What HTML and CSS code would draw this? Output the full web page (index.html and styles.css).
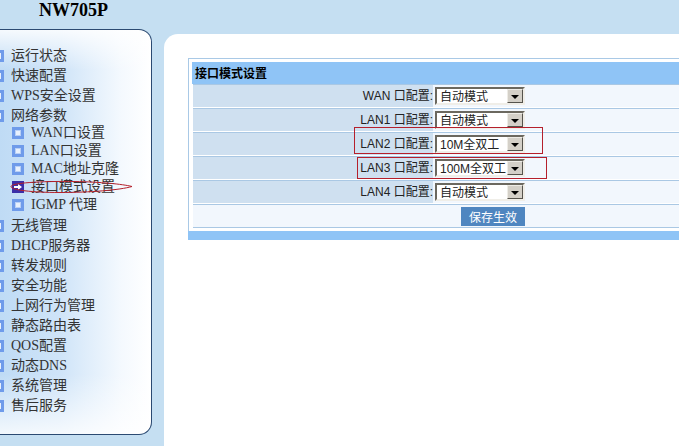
FILE: index.html
```html
<!DOCTYPE html>
<html lang="zh">
<head>
<meta charset="utf-8">
<title>NW705P</title>
<link rel="stylesheet" href="styles.css">
</head>
<body>
<header class="top"><h1 class="brand">NW705P</h1></header>
<div class="page">
  <nav class="side">
    <div class="item"><i class="ico"></i>运行状态</div>
    <div class="item"><i class="ico"></i>快速配置</div>
    <div class="item"><i class="ico"></i>WPS安全设置</div>
    <div class="item"><i class="ico"></i>网络参数</div>
    <div class="subs">
      <div class="sub"><i class="ico"></i>WAN口设置</div>
      <div class="sub"><i class="ico"></i>LAN口设置</div>
      <div class="sub"><i class="ico"></i>MAC地址克隆</div>
      <div class="sub"><i class="ico cur"><svg width="12" height="12" viewBox="0 0 12 12"><path d="M2 5h4V3l4 3-4 3V7H2z" fill="#fff"/></svg></i>接口模式设置</div>
      <div class="sub"><i class="ico"></i>IGMP 代理</div>
    </div>
    <div class="item"><i class="ico"></i>无线管理</div>
    <div class="item"><i class="ico"></i>DHCP服务器</div>
    <div class="item"><i class="ico"></i>转发规则</div>
    <div class="item"><i class="ico"></i>安全功能</div>
    <div class="item"><i class="ico"></i>上网行为管理</div>
    <div class="item"><i class="ico"></i>静态路由表</div>
    <div class="item"><i class="ico"></i>QOS配置</div>
    <div class="item"><i class="ico"></i>动态DNS</div>
    <div class="item"><i class="ico"></i>系统管理</div>
    <div class="item"><i class="ico"></i>售后服务</div>
  </nav>
  <main class="main">
    <section class="panel">
      <div class="inner">
        <div class="head">接口模式设置</div>
        <div class="row"><div class="lab">WAN 口配置:</div><div class="val"><span class="sel"><span class="txt">自动模式</span><span class="arr"></span></span></div></div>
        <div class="row"><div class="lab">LAN1 口配置:</div><div class="val"><span class="sel"><span class="txt">自动模式</span><span class="arr"></span></span></div></div>
        <div class="row"><div class="lab">LAN2 口配置:</div><div class="val"><span class="sel"><span class="txt">10M全双工</span><span class="arr"></span></span></div></div>
        <div class="row"><div class="lab">LAN3 口配置:</div><div class="val"><span class="sel"><span class="txt">100M全双工</span><span class="arr"></span></span></div></div>
        <div class="row"><div class="lab">LAN4 口配置:</div><div class="val"><span class="sel"><span class="txt">自动模式</span><span class="arr"></span></span></div></div>
        <div class="row foot"><button class="save" type="button">保存生效</button></div>
      </div>
      <div class="band"></div>
    </section>
  </main>
</div>
<div class="mark mark-a"></div>
<div class="mark mark-b"></div>
<svg class="oval" width="124" height="14" viewBox="0 0 124 14"><path d="M1 6.5C1 3 30 1 65 1.5 90 2 112 4 122 6.5 110 10 80 12.5 50 12.5 22 12.5 1 10 1 6.5z" fill="none" stroke="#b5202c" stroke-width="1"/></svg>
</body>
</html>
```
FILE: styles.css
```css
* { box-sizing: border-box; }
html, body { margin: 0; height: 100%; }
body {
  position: relative;
  width: 679px;
  height: 446px;
  overflow: hidden;
  background: #c5dff2;
  font-family: "Liberation Serif", "Noto Sans CJK SC", serif;
  color: #333;
}
.top { height: 29px; padding: 0 0 0 39px; }
.brand { margin: 0; font-size: 18px; line-height: 20px; font-weight: bold; color: #000; }
.page { display: flex; height: 417px; }
.side {
  flex: none;
  width: 152px;
  height: 406px;
  padding-top: 16px;
  overflow: hidden;
  border: 1px solid #2b4a72;
  border-left: none;
  border-radius: 0 13px 13px 0;
  background:
    linear-gradient(180deg, rgba(255,255,255,.85) 0, rgba(255,255,255,0) 40px),
    linear-gradient(0deg, rgba(255,255,255,.8) 0, rgba(255,255,255,0) 60px),
    linear-gradient(90deg, #bfdbf5 0, #cfe4f8 40%, #f4f9fe 80%, #fff 100%);
  font-size: 14px;
}
.item { display: flex; align-items: center; gap: 7px; height: 20px; line-height: 20px; white-space: nowrap; }
.subs { margin: -2px 0 2px; }
.sub { display: flex; align-items: center; gap: 7px; height: 18px; padding-left: 12px; line-height: 18px; white-space: nowrap; }
.ico {
  flex: none;
  display: block;
  width: 12px;
  height: 12px;
  border: 3px solid #6f9bea;
  background: #e8f1fd;
  box-shadow: inset 0 0 0 1px #b9d0f6;
}
.item .ico { width: 4px; border-left: 0; box-shadow: none; }
.ico.cur { border: 0; background: #3a2fa8; box-shadow: none; }
.ico svg { display: block; }
.main {
  flex: none;
  width: 515px;
  height: 417px;
  margin: 5px 0 0 12px;
  padding: 24px 0 0 24px;
  background: #fff;
  border-radius: 14px 0 0 0;
}
.panel { width: 491px; height: 182px; border: 1px solid #a9c9e6; border-width: 1px 0 0 1px; }
.inner { padding: 3px 0 3px 3px; }
.head {
  height: 22px;
  padding-left: 3px;
  background: #8fc4f6;
  font: bold 12px/21px "Noto Sans CJK SC", sans-serif;
  color: #000;
}
.row { display: flex; height: 24px; margin-left: 1px; border-top: 1px solid #aac8e4; border-bottom: 1px solid #fff; }
.lab {
  flex: none;
  width: 240px;
  background: #cfe0f0;
  text-align: right;
  font: 12px/23px "Liberation Sans", "Noto Sans CJK SC", sans-serif;
  color: #222;
  white-space: nowrap;
}
.val { flex: 1; padding: 2px 0 0 2px; background: #f2f7fd; }
.sel {
  display: flex;
  width: 90px;
  height: 18px;
  border: 2px solid;
  border-color: #6b685f #f0eee8 #f0eee8 #6b685f;
  background: #fff;
  font: 12px/17px "Liberation Sans", "Noto Sans CJK SC", sans-serif;
  color: #222;
}
.txt { flex: 1; padding-left: 3px; white-space: nowrap; overflow: hidden; }
.arr {
  flex: none;
  position: relative;
  width: 16px;
  border: 1px solid;
  border-color: #eeece6 #55534c #55534c #eeece6;
  background: #d4d0c8;
}
.arr::after {
  content: "";
  position: absolute;
  left: 3px;
  top: 5px;
  border: 4px solid transparent;
  border-top: 4px solid #000;
  border-bottom: 0;
}
.foot { align-items: center; padding-left: 268px; background: #f2f7fd; border-bottom: 1px solid #aac8e4; }
.save {
  width: 64px;
  height: 19px;
  margin: 0;
  padding: 0;
  border: 0;
  background: #4f86c0;
  color: #fff;
  font: 12px/19px "Noto Sans CJK SC", sans-serif;
}
.band { height: 9px; background: #8fc4f6; margin-left: -1px; }
.mark { position: absolute; border: 1px solid #b5202c; }
.mark-a { left: 354px; top: 127px; width: 189px; height: 27px; }
.mark-b { left: 357px; top: 157px; width: 190px; height: 22px; }
.oval { position: absolute; left: 10px; top: 180px; }
```
